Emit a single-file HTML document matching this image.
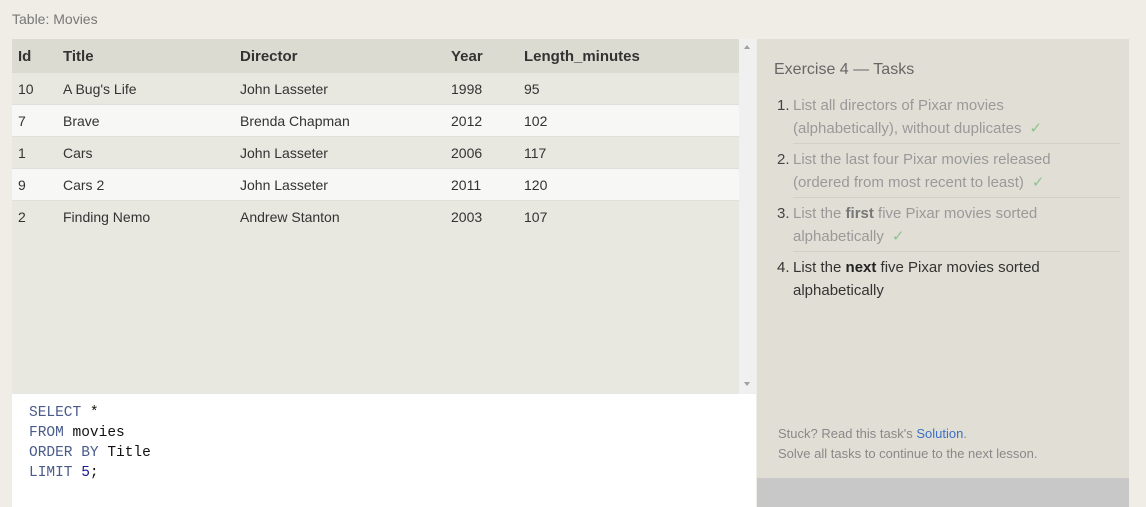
<!DOCTYPE html>
<html><head><style>
body{margin:0;width:1146px;height:507px;background:#efede6;font-family:"Liberation Sans",sans-serif;overflow:hidden;position:relative;color:#333}
.t{position:absolute;left:12px;top:11px;font-size:14px;color:#777}
.tbl{position:absolute;left:12px;top:39px;width:727px;height:355px;background:#e8e7e0}
.row{height:32px;position:relative;font-size:14px;border-bottom:1px solid #e0dfd9;box-sizing:border-box}
.row span{position:absolute;top:8px}
.h{height:34px;background:#dcdbd2;font-weight:bold;font-size:15px;border:none}
.h span{top:9px}
.e{background:#f7f7f6}
.sb{position:absolute;left:739px;top:39px;width:17px;height:355px;background:#f0f0f0}
.ed{position:absolute;left:12px;top:394px;width:744px;height:113px;background:#fff;font-family:"Liberation Mono",monospace;font-size:14.5px;line-height:20px;padding:9px 0 0 17px;box-sizing:border-box;color:#111}
.k{color:#4a5b8a}
.rp{position:absolute;left:757px;top:39px;width:372px;height:468px;background:#e1dfd5}
.rp h3{position:absolute;left:17px;top:22px;margin:0;font-weight:normal;font-size:16px;color:#666}
.li{position:absolute;left:36px;width:330px;font-size:15px;line-height:23px;color:#999}
.li .n{color:#444;position:absolute;left:-16px;top:0}
.li b{color:#777}
.ok{color:#8fc28f;margin-left:8px}
.hr{position:absolute;left:36px;width:327px;height:1px;background:#d3d1c7}
.ft{position:absolute;left:21px;font-size:13px;color:#888}
.btn{position:absolute;left:0;top:439px;width:372px;height:29px;background:#c8c8c8}
</style></head><body>
<div class="t">Table: Movies</div>
<div class="tbl">
<div class="row h"><span style="left:6px">Id</span><span style="left:51px">Title</span><span style="left:228px">Director</span><span style="left:439px">Year</span><span style="left:512px">Length_minutes</span></div>
<div class="row"><span style="left:6px">10</span><span style="left:51px">A Bug's Life</span><span style="left:228px">John Lasseter</span><span style="left:439px">1998</span><span style="left:512px">95</span></div>
<div class="row e"><span style="left:6px">7</span><span style="left:51px">Brave</span><span style="left:228px">Brenda Chapman</span><span style="left:439px">2012</span><span style="left:512px">102</span></div>
<div class="row"><span style="left:6px">1</span><span style="left:51px">Cars</span><span style="left:228px">John Lasseter</span><span style="left:439px">2006</span><span style="left:512px">117</span></div>
<div class="row e"><span style="left:6px">9</span><span style="left:51px">Cars 2</span><span style="left:228px">John Lasseter</span><span style="left:439px">2011</span><span style="left:512px">120</span></div>
<div class="row" style="border:none"><span style="left:6px">2</span><span style="left:51px">Finding Nemo</span><span style="left:228px">Andrew Stanton</span><span style="left:439px">2003</span><span style="left:512px">107</span></div>
</div>
<div class="sb"><div style="position:absolute;left:5px;top:6px;border:3.5px solid transparent;border-bottom:4px solid #a0a0a0;border-top:0"></div><div style="position:absolute;left:5px;top:343px;border:3.5px solid transparent;border-top:4px solid #a0a0a0;border-bottom:0"></div></div>
<div class="ed"><span class="k">SELECT</span> *<br><span class="k">FROM</span> movies<br><span class="k">ORDER BY</span> Title<br><span class="k">LIMIT</span> <span style="color:#1a1a8a">5</span>;</div>
<div class="rp">
<h3>Exercise 4 — Tasks</h3>
<div class="li" style="top:55px"><span class="n">1.</span>List all directors of Pixar movies<br>(alphabetically), without duplicates<span class="ok">✓</span></div>
<div class="hr" style="top:104px"></div>
<div class="li" style="top:109px"><span class="n">2.</span>List the last four Pixar movies released<br>(ordered from most recent to least)<span class="ok">✓</span></div>
<div class="hr" style="top:158px"></div>
<div class="li" style="top:163px"><span class="n">3.</span>List the <b>first</b> five Pixar movies sorted<br>alphabetically<span class="ok">✓</span></div>
<div class="hr" style="top:212px"></div>
<div class="li" style="top:217px;color:#333"><span class="n" style="color:#333">4.</span>List the <b style="color:#222">next</b> five Pixar movies sorted<br>alphabetically</div>
<div class="ft" style="top:387px">Stuck? Read this task's <span style="color:#3b6fc4">Solution</span>.</div>
<div class="ft" style="top:407px">Solve all tasks to continue to the next lesson.</div>
<div class="btn"></div>
</div>
</body></html>
